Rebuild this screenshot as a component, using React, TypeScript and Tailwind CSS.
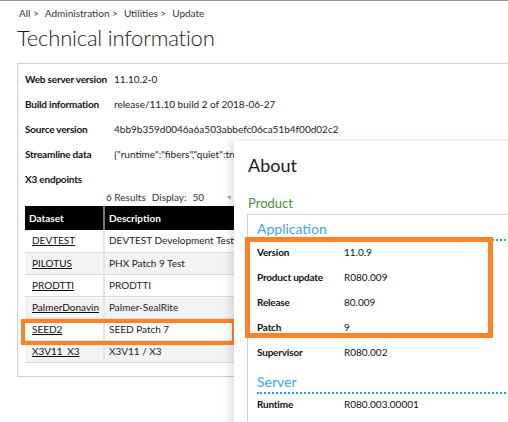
import React from "react";

const font = { fontFamily: 'Lato, "Noto Sans", sans-serif' };

interface InfoRow {
  label: string;
  value: string;
}

const techRows: InfoRow[] = [
  { label: "Web server version", value: "11.10.2-0" },
  { label: "Build information", value: "release/11.10 build 2 of 2018-06-27" },
  { label: "Source version", value: "4bb9b359d0046a6a503abbefc06ca51b4f00d02c2" },
  { label: "Streamline data", value: '{"runtime":"fibers","quiet":true,' },
];

const endpoints = [
  { dataset: "DEVTEST", description: "DEVTEST Development Testing" },
  { dataset: "PILOTUS", description: "PHX Patch 9 Test" },
  { dataset: "PRODTTI", description: "PRODTTI" },
  { dataset: "PalmerDonavin", description: "Palmer-SealRite" },
  { dataset: "SEED2", description: "SEED Patch 7" },
  { dataset: "X3V11_X3", description: "X3V11 / X3" },
];

const appRows: InfoRow[] = [
  { label: "Version", value: "11.0.9" },
  { label: "Product update", value: "R080.009" },
  { label: "Release", value: "80.009" },
  { label: "Patch", value: "9" },
  { label: "Supervisor", value: "R080.002" },
];

function AboutRow({ label, value }: InfoRow) {
  return (
    <div className="flex h-[25px] items-center text-[10px] text-[#111]">
      <span className="w-[87px] font-bold tracking-[-0.2px]">{label}</span>
      <span>{value}</span>
    </div>
  );
}

export default function App() {
  return (
    <div
      className="relative w-[508px] h-[422px] overflow-hidden bg-white border-t border-[#9a9a9a] text-[#222]"
      style={font}
    >
      {/* breadcrumb */}
      <div className="pl-[19px] pt-[5px] text-[10px] leading-[14px] text-[#333] flex gap-[6px]">
        <span>All &gt;</span>
        <span>Administration &gt;</span>
        <span>Utilities &gt;</span>
        <span>Update</span>
      </div>
      <h1 className="pl-[17px] mt-[3px] text-[22px] leading-[30px] font-light tracking-[-0.2px] text-[#1a1a1a]">
        Technical information
      </h1>

      {/* main card */}
      <div className="ml-[17px] mt-[10px] w-[620px] h-[314px] border border-[#cfcfcf] pl-[7px] pt-[3px]">
        {techRows.map((r) => (
          <div key={r.label} className="flex h-[25px] items-center text-[10px] whitespace-nowrap">
            <span className="w-[89px] shrink-0 font-bold tracking-[-0.2px] text-[#111]">{r.label}</span>
            <span className="text-[#222]">{r.value}</span>
          </div>
        ))}
        <div className="flex h-[25px] items-center text-[10px] font-bold tracking-[-0.2px] text-[#111]">X3 endpoints</div>
        <div className="flex h-[10px] items-center pl-[81px] text-[10px] text-[#333] gap-[6px]">
          <span>6 Results</span>
          <span>Display:</span>
          <span>50</span>
          <span className="ml-[16px] text-[7px] text-[#aaa]">▼</span>
          <span className="ml-[12px] w-[6px] h-[6px] bg-[#3a8fd6]" />
        </div>
        <table className="mt-[4px] w-[480px] table-fixed border-collapse text-[10px]">
          <thead>
            <tr className="bg-black text-white h-[24px]">
              <th className="w-[79px] text-left font-bold pl-[4px] border-r-2 border-[#777]">Dataset</th>
              <th className="text-left font-bold pl-[4px]">Description</th>
            </tr>
          </thead>
          <tbody>
            {endpoints.map((e, i) => (
              <tr
                key={e.dataset}
                className={`h-[22px] border-b border-[#dcdcdc] ${i % 2 === 1 ? "bg-[#f2f3f4]" : "bg-white"}`}
              >
                <td className="pl-[7px] border-r-2 border-[#e6e6e6] whitespace-nowrap">
                  <span className="underline text-[#111]">{e.dataset}</span>
                </td>
                <td className="pl-[4px] text-[#222] whitespace-nowrap">{e.description}</td>
              </tr>
            ))}
          </tbody>
        </table>
      </div>

      {/* SEED2 highlight */}
      <div className="absolute z-10 left-[21px] top-[318px] w-[215px] h-[26px] border-[4px] border-[#ff8226]" />

      {/* About panel */}
      <div className="absolute z-20 left-[234px] top-[140px] w-[300px] h-[300px] bg-white shadow-[-4px_0_8px_rgba(0,0,0,0.12)] pl-[14px]">
        <div className="pt-[12px] text-[18px] leading-[24px] text-[#1a1a1a]">About</div>
        <div className="mt-[17px] text-[13px] leading-[18px] text-[#4c8a3c]">Product</div>
        <div className="mt-[2px] -ml-[1px] border border-[#cfcfcf] h-[220px] pl-[9px]">
          <div className="pt-[5px] text-[14px] leading-[18px] text-[#3fa6e3]">Application</div>
          <div className="mt-[1px] border-b-2 border-dotted border-[#22a2e6]" />
          <div className="-mt-[1px]">
            {appRows.map((r) => (
              <AboutRow key={r.label} {...r} />
            ))}
          </div>
          <div className="mt-[8px] text-[14px] leading-[18px] text-[#3fa6e3]">Server</div>
          <div className="mt-[1px] border-b-2 border-dotted border-[#22a2e6]" />
          <div className="-mt-[2px]">
            <AboutRow label="Runtime" value="R080.003.00001" />
          </div>
        </div>
      </div>

      {/* Application highlight */}
      <div className="absolute z-30 left-[245px] top-[236px] w-[248px] h-[101px] border-[5px] border-[#ff8226]" />
    </div>
  );
}
